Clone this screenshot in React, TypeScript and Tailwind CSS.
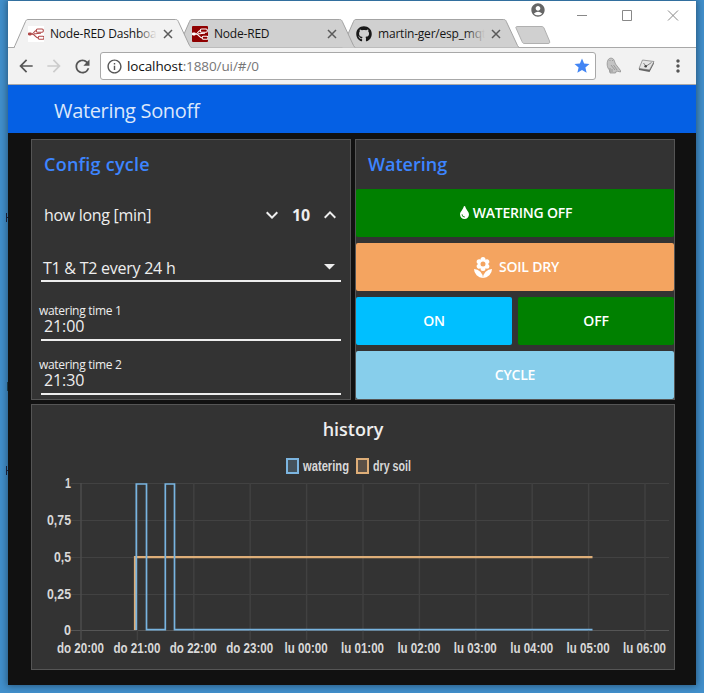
import React from 'react';
import {
  MdAccountCircle,
  MdArrowBack,
  MdArrowForward,
  MdInfoOutline,
  MdKeyboardArrowDown,
  MdKeyboardArrowUp,
  MdLocalFlorist,
  MdMoreVert,
  MdRefresh,
  MdStar,
} from 'react-icons/md';
import { FaGithub, FaTint } from 'react-icons/fa';

function NodeRedIcon({ solid }: { solid?: boolean }) {
  const ink = solid ? '#fff' : '#b04848';
  return (
    <svg width="16" height="16" viewBox="0 0 16 16" fill="none" stroke={ink} strokeWidth="1.1">
      <rect width="16" height="16" rx={solid ? 1 : 0} fill={solid ? '#8f0000' : '#fff'} stroke="none" />
      <path d="M0 8H3.5C6 8 6 4.5 8.5 4.5M3.5 8C7.5 8 7 12 10.5 12M6 7.8C9 8 10 7 13 7.2" />
      <rect x="8.3" y="3" width="7" height="3.2" rx="1.2" />
      <rect x="10.2" y="10.2" width="5.8" height="3" rx="1.2" />
      <rect x="0" y="6.6" width="3.8" height="2.8" rx="1.1" fill={ink} stroke="none" />
    </svg>
  );
}

function Tab({ active, icon, title, className }: { active?: boolean; icon: React.ReactNode; title: string; className: string }) {
  const fade = active ? 'to-[#f2f2f2]' : 'to-[#d0d0d0]';
  return (
    <div className={`relative h-[29px] w-[178px] shrink-0 ${className}`}>
      <svg className="absolute inset-0" width="178" height="29" viewBox="0 0 178 29">
        <path
          d="M0 28.5L1 26.500L11.500 2.500C12.200 1 12.700 .5 14 .5H161.500C163 .5 163.700 1 164.300 2.500L175.500 26.500L177 28.500"
          fill={active ? '#f2f2f2' : '#d0d0d0'}
          stroke="#a3a3a3"
        />
        {active && <path d="M1 28.5H176.500" stroke="#f2f2f2" strokeWidth="1.4" />}
      </svg>
      <div className="relative flex h-full items-center pl-[14px]">
        {icon}
        <div className="relative ml-[6px] w-[107px] overflow-hidden text-[12px] leading-4 tracking-[-0.2px] whitespace-nowrap text-[#151515]">
          {title}
          <div className={`absolute inset-y-0 right-0 w-5 bg-linear-to-r from-transparent ${fade}`} />
        </div>
        <svg className="ml-[6px]" width="10" height="10" viewBox="0 0 10 10" stroke="#5a5a5a" strokeWidth="1.5">
          <path d="M1 1L9 9M9 1L1 9" />
        </svg>
      </div>
    </div>
  );
}

function TabStrip() {
  return (
    <div className="flex h-[47px] items-end border-b border-[#a8a8a8] bg-white pl-[6px]">
      <div className="-mb-px flex items-end">
        <Tab active icon={<NodeRedIcon />} title="Node-RED Dashboard" className="z-30" />
        <Tab icon={<NodeRedIcon solid />} title="Node-RED" className="z-20 -ml-[14px]" />
        <Tab icon={<FaGithub size={16} color="#181818" />} title="martin-ger/esp_mqtt" className="z-10 -ml-[14px]" />
      </div>
      <svg className="mb-[3px] -ml-[5px] shrink-0" width="36" height="18" viewBox="0 0 36 18">
        <path d="M3 .5H26C28 .5 28.500 1 29 2L34.500 15C35 17 34.500 17.500 33 17.500H10C8 17.500 7.500 17 7 15.500L1 2C.5 1 1 .5 3 .5Z" fill="#d0d0d0" stroke="#b0b0b0" />
      </svg>
      <div className="mb-auto flex items-start text-[#666]">
        <MdAccountCircle size={16} className="mt-[1px] -ml-[21px]" />
        <svg className="mt-[9px] ml-[31px]" width="104" height="11" viewBox="0 0 104 11" fill="none" stroke="#888">
          <path d="M0 5.500H10M45.500 .5H54.500V10.500H45.500ZM91 .5L101 10.500M101 .5L91 10.500" />
        </svg>
      </div>
    </div>
  );
}

function Toolbar() {
  return (
    <div className="flex h-[37px] items-center border-b border-[#a8a8a8] bg-[#f2f2f2] pl-[8px] text-[#555]">
      <MdArrowBack size={20} />
      <MdArrowForward size={20} className="ml-[8px] text-[#ccc]" />
      <MdRefresh size={21} className="ml-[8px]" />
      <div className="ml-[7px] flex h-[28px] w-[496px] items-center rounded-[3px] border border-[#a8a8a8] bg-white pr-[4px] pl-[5px]">
        <MdInfoOutline size={17} />
        <span className="ml-[4px] text-[13.5px] leading-5 tracking-[-0.1px] text-[#777]">
          <span className="text-[#111]">localhost</span>:1880/ui/#/0
        </span>
        <MdStar size={18} className="ml-auto text-[#4285f4]" />
      </div>
      <svg className="ml-[10px]" width="16" height="18" viewBox="0 0 16 18">
        <path d="M2 3C3 .5 7 .5 8 3L9.500 7L14.500 13.500V15L10.500 14L9.500 16H4L3.500 13C1 11 .5 6 2 3Z" fill="#c4c4c4" stroke="#888" strokeWidth=".7" />
        <path d="M4 3V4M6.500 3V4M5 8L9 13M7.500 8L11 13M4 11V15M6 12V15" stroke="#888" strokeWidth=".7" fill="none" />
      </svg>
      <svg className="ml-[16px]" width="17" height="16" viewBox="0 0 17 16">
        <path d="M4.500 2L16 3.500L11.500 12L1 10.500Z" fill="#e4e4e4" stroke="#888" strokeWidth=".8" />
        <path d="M1 10.500V12L11.500 14L16 5.500V4L11.500 12Z" fill="#666" />
        <path d="M5.500 5L8 8.300L13.500 4.500" stroke="#777" strokeWidth=".9" fill="none" />
        <circle cx="7.700" cy="8.300" r="1.300" fill="#444" />
      </svg>
      <MdMoreVert size={20} className="ml-[13px]" />
    </div>
  );
}

function TimeField({ label, value }: { label: string; value: string }) {
  return (
    <div className="flex h-[54px] flex-col">
      <div className="mt-[17px] h-[14px] pl-[7px] text-[12px] leading-[14px] tracking-[-0.3px]">{label}</div>
      <div className="mr-[9px] ml-[9px] h-[23px] border-b-2 border-[#eee] pl-[3px] text-[16px] leading-[16px] tracking-[-0.1px]">{value}</div>
    </div>
  );
}

function ConfigCard() {
  return (
    <section className="flex h-[261px] w-[320px] flex-col border border-[#555] bg-[#333] text-[#eee]">
      <h2 className="h-[49px] pl-[12px] text-[18px] leading-[48px] font-semibold tracking-[0.25px] text-[#3d85ff]">Config cycle</h2>
      <div className="flex h-[51px] items-center pr-[8px] pl-[12px] text-[16px]">
        <span className="tracking-[-0.3px]">how long [min]</span>
        <MdKeyboardArrowDown size={24} className="ml-auto" />
        <span className="mx-[8px] font-bold tracking-[-0.1px]">10</span>
        <MdKeyboardArrowUp size={24} />
      </div>
      <div className="mx-[9px] mt-[18px] flex h-[24px] items-center border-b-2 border-[#eee] pr-[6px] pb-[2px] pl-[2px] text-[16px] tracking-[-0.25px]">
        <span>T1 &amp; T2 every 24 h</span>
        <svg className="mb-[2px] ml-auto" width="11" height="6" viewBox="0 0 11 6" fill="#eee">
          <path d="M0 0H11L5.500 5.500Z" />
        </svg>
      </div>
      <div className="mt-[5px]">
        <TimeField label="watering time 1" value="21:00" />
        <TimeField label="watering time 2" value="21:30" />
      </div>
    </section>
  );
}

function Button({ children, className }: { children: React.ReactNode; className: string }) {
  return (
    <button className={`flex h-[48px] items-center justify-center rounded-[2px] pb-[2px] text-[14px] font-semibold tracking-[-0.22px] text-white ${className}`}>
      {children}
    </button>
  );
}

function WateringCard() {
  return (
    <section className="h-[261px] w-[320px] border border-[#555] bg-[#333]">
      <h2 className="h-[49px] pl-[12px] text-[18px] leading-[48px] font-semibold text-[#3d85ff]">Watering</h2>
      <div className="grid grid-cols-2 gap-[6px]">
        <Button className="col-span-2 bg-[#008000]">
          <FaTint size={13} className="mt-[1px] mr-[2px]" />
          WATERING OFF
        </Button>
        <Button className="col-span-2 bg-[#f4a460]">
          <MdLocalFlorist size={24} className="mt-[4px] mr-[4px]" />
          SOIL DRY
        </Button>
        <Button className="bg-[#00bfff]">ON</Button>
        <Button className="bg-[#008000]">OFF</Button>
        <Button className="col-span-2 bg-[#87ceeb]">CYCLE</Button>
      </div>
    </section>
  );
}

const hours = ['do 20:00', 'do 21:00', 'do 22:00', 'do 23:00', 'lu 00:00', 'lu 01:00', 'lu 02:00', 'lu 03:00', 'lu 04:00', 'lu 05:00', 'lu 06:00'];
const levels = [
  { label: '1', y: 78.5, w: 6 },
  { label: '0,75', y: 115.5, w: 24 },
  { label: '0,5', y: 152.5, w: 17 },
  { label: '0,25', y: 189.5, w: 24 },
  { label: '0', y: 225.5, w: 7 },
];

function HistoryCard() {
  return (
    <section className="mt-[4px] h-[266px] w-[644px] border border-[#555] bg-[#333] text-[#eee]">
      <h2 className="h-0 pt-[11px] text-center text-[18px] leading-[26px] font-semibold">history</h2>
      <svg className="-mt-[11px]" width="642" height="264" viewBox="0 0 642 264" fontFamily="'Liberation Sans', Arial, sans-serif" fontSize="14" fontWeight="bold" fill="#d8d8d8">
        <rect x="255" y="54" width="11" height="14" fill="#45525b" stroke="#7cb5e0" strokeWidth="2" />
        <text x="271" y="66" textLength="46" lengthAdjust="spacingAndGlyphs">watering</text>
        <rect x="325" y="54" width="11" height="14" fill="#5a5047" stroke="#deae78" strokeWidth="2" />
        <text x="341" y="66" textLength="38" lengthAdjust="spacingAndGlyphs">dry soil</text>
        {levels.map((l) => (
          <g key={l.label}>
            <path d={`M39 ${l.y}H637`} stroke={l.label === '0' ? '#555' : '#424242'} />
            <text x={39 - l.w} y={l.y + 4} textLength={l.w} lengthAdjust="spacingAndGlyphs">{l.label}</text>
          </g>
        ))}
        {hours.map((h, i) => {
          const x = 49 + i * 56.4;
          const w = h.startsWith('do') ? 47 : 43;
          return (
            <g key={h}>
              <path d={`M${x} 78V235`} stroke={i === 0 ? '#4c4c4c' : '#414141'} strokeWidth="1.5" />
              <text x={x - w / 2 - 0.5} y="248" textLength={w} lengthAdjust="spacingAndGlyphs">{h}</text>
            </g>
          );
        })}
        <path d="M103 225V152.200H560.500" fill="none" stroke="#deae78" strokeWidth="2.200" />
        <path d="M104.300 225V79H114.500V224.700H133.300V79H142.500V224.700H560.500" fill="none" stroke="#78b4e0" strokeWidth="1.700" />
      </svg>
    </section>
  );
}

/* Slivers of desktop labels that peek out beside the window's left edge. */
function DesktopEdge() {
  return (
    <div className="flex w-[8px] shrink-0 flex-col items-end pt-[212px]">
      <div className="flex h-[9px] w-[2px] flex-col justify-center border-l border-[#1c2440]">
        <div className="h-px bg-[#1c2440]" />
      </div>
      <div className="mt-[160px] h-[9px] w-px bg-[#1f4a5c]" />
      <div className="mt-[75px] flex h-[9px] w-[2px] flex-col justify-center border-l border-[#1c2440]">
        <div className="h-px bg-[#1c2440]" />
      </div>
    </div>
  );
}

export default function App() {
  return (
    <div className="flex h-[693px] w-[704px] overflow-hidden bg-[#418fcb] pt-px font-['Open_Sans','Noto_Sans',sans-serif]">
      <DesktopEdge />
      <div className="h-[684px] w-[688px] shrink-0 bg-[#111] shadow-[0_0_7px_1px_rgba(0,0,0,0.4)]">
        <TabStrip />
        <Toolbar />
        <header className="h-[48px] bg-[#0560e4] pl-[46px] text-[20px] leading-[52px] tracking-[-0.33px] text-[#dbe7fb]">Watering Sonoff</header>
        <main className="pt-[6px] pl-[23px]">
          <div className="flex gap-[4px]">
            <ConfigCard />
            <WateringCard />
          </div>
          <HistoryCard />
        </main>
      </div>
    </div>
  );
}
